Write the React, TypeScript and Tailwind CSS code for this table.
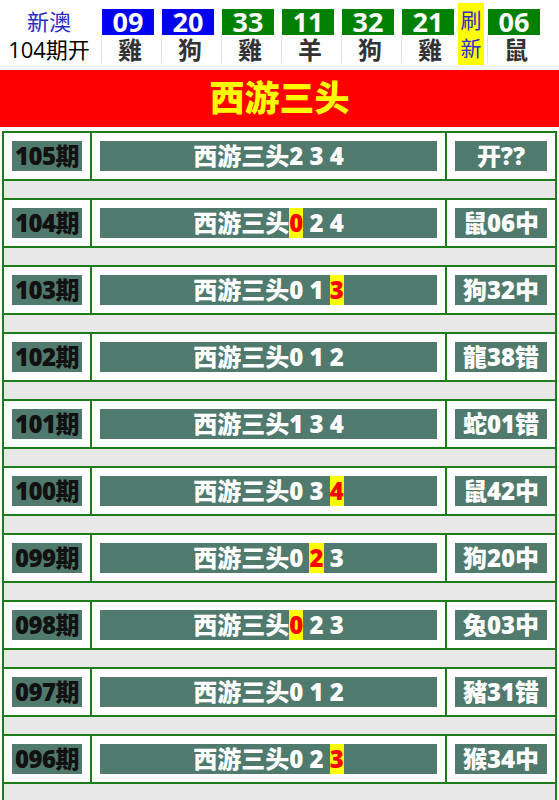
import { Fragment } from "react";

interface Ball {
    num: string;
    animal: string;
    color: "blue" | "green";
}

interface Draw {
    period: string;
    digits: string[];
    hit: number; // index of the highlighted digit, -1 for none
    result: string;
}

const balls: Ball[] = [
    { num: "09", animal: "雞", color: "blue" },
    { num: "20", animal: "狗", color: "blue" },
    { num: "33", animal: "雞", color: "green" },
    { num: "11", animal: "羊", color: "green" },
    { num: "32", animal: "狗", color: "green" },
    { num: "21", animal: "雞", color: "green" },
];

const draws: Draw[] = [
    { period: "105期", digits: ["2", "3", "4"], hit: -1, result: "开??" },
    { period: "104期", digits: ["0", "2", "4"], hit: 0, result: "鼠06中" },
    { period: "103期", digits: ["0", "1", "3"], hit: 2, result: "狗32中" },
    { period: "102期", digits: ["0", "1", "2"], hit: -1, result: "龍38错" },
    { period: "101期", digits: ["1", "3", "4"], hit: -1, result: "蛇01错" },
    { period: "100期", digits: ["0", "3", "4"], hit: 2, result: "鼠42中" },
    { period: "099期", digits: ["0", "2", "3"], hit: 1, result: "狗20中" },
    { period: "098期", digits: ["0", "2", "3"], hit: 0, result: "兔03中" },
    { period: "097期", digits: ["0", "1", "2"], hit: -1, result: "豬31错" },
    { period: "096期", digits: ["0", "2", "3"], hit: 2, result: "猴34中" },
];

const BallCell = ({ ball }: { ball: Ball }) => (
    <div className="w-[60px] flex flex-col items-stretch">
        <div
            className={
                "mx-[4px] mt-[9px] h-[26px] flex items-center justify-center text-white font-bold text-[27px] leading-[26px] " +
                (ball.color === "blue" ? "bg-[#0000f0]" : "bg-[#008000]")
            }
        >
            {ball.num}
        </div>
        <div className="h-[28px] flex items-end justify-center border-l border-[#e2e2e2] ml-[3px] text-[24px] font-bold text-[#333] leading-[26px]">
            {ball.animal}
        </div>
    </div>
);

const App = () => {
    return (
        <div className="w-[559px] min-h-screen bg-white font-['Open_Sans','Noto_Sans_CJK_SC',sans-serif]">
            {/* latest draw */}
            <div className="h-[70px] flex border-b-[5px] border-[#f1f4f7]">
                <div className="w-[98px] flex flex-col items-center pt-[8px]">
                    <div className="text-[22px] leading-[27px] text-[#2b2bc8]">新澳</div>
                    <div className="text-[22px] leading-[28px] text-black">104期开</div>
                </div>
                {balls.map((b, i) => (
                    <BallCell key={i} ball={b} />
                ))}
                <div className="w-[26px] mt-[3px] h-[62px] bg-[#ffff00] flex flex-col items-center justify-center text-[21px] leading-[28px] text-[#2d2dc0]">
                    <span>刷</span>
                    <span>新</span>
                </div>
                <BallCell ball={{ num: "06", animal: "鼠", color: "green" }} />
            </div>

            {/* title */}
            <div className="h-[57px] bg-[#ff0000] flex items-center justify-center text-[35px] font-black text-[#ffff00]">
                西游三头
            </div>

            {/* history */}
            <div className="mx-[2px] mt-[4px] border-2 border-b-0 border-[#1c7c1c]">
                {draws.map((d) => (
                    <Fragment key={d.period}>
                        <div className="flex h-[48px] border-b-2 border-[#1c7c1c] text-[24px] font-black leading-[30px]">
                            <div className="w-[88px] border-r-2 border-[#1c7c1c] p-[8px]">
                                <div className="h-[30px] bg-[#507a6e] text-[#111] text-center tracking-[-0.5px]">{d.period}</div>
                            </div>
                            <div className="flex-1 p-[8px]">
                                <div className="h-[30px] bg-[#507a6e] text-white text-center whitespace-pre">
                                    西游三头
                                    {d.digits.map((n, i) => (
                                        <Fragment key={i}>
                                            {i > 0 && " "}
                                            {i === d.hit ? (
                                                <span className="inline-block h-[30px] bg-[#ffff00] text-[#ff0000]">{n}</span>
                                            ) : (
                                                n
                                            )}
                                        </Fragment>
                                    ))}
                                </div>
                            </div>
                            <div className="w-[110px] border-l-2 border-[#1c7c1c] p-[8px]">
                                <div className="h-[30px] bg-[#507a6e] text-white text-center">{d.result}</div>
                            </div>
                        </div>
                        <div className="h-[19px] bg-[#e8e8e8] border-b-2 border-[#1c7c1c]" />
                    </Fragment>
                ))}
            </div>
        </div>
    );
};

export default App;
